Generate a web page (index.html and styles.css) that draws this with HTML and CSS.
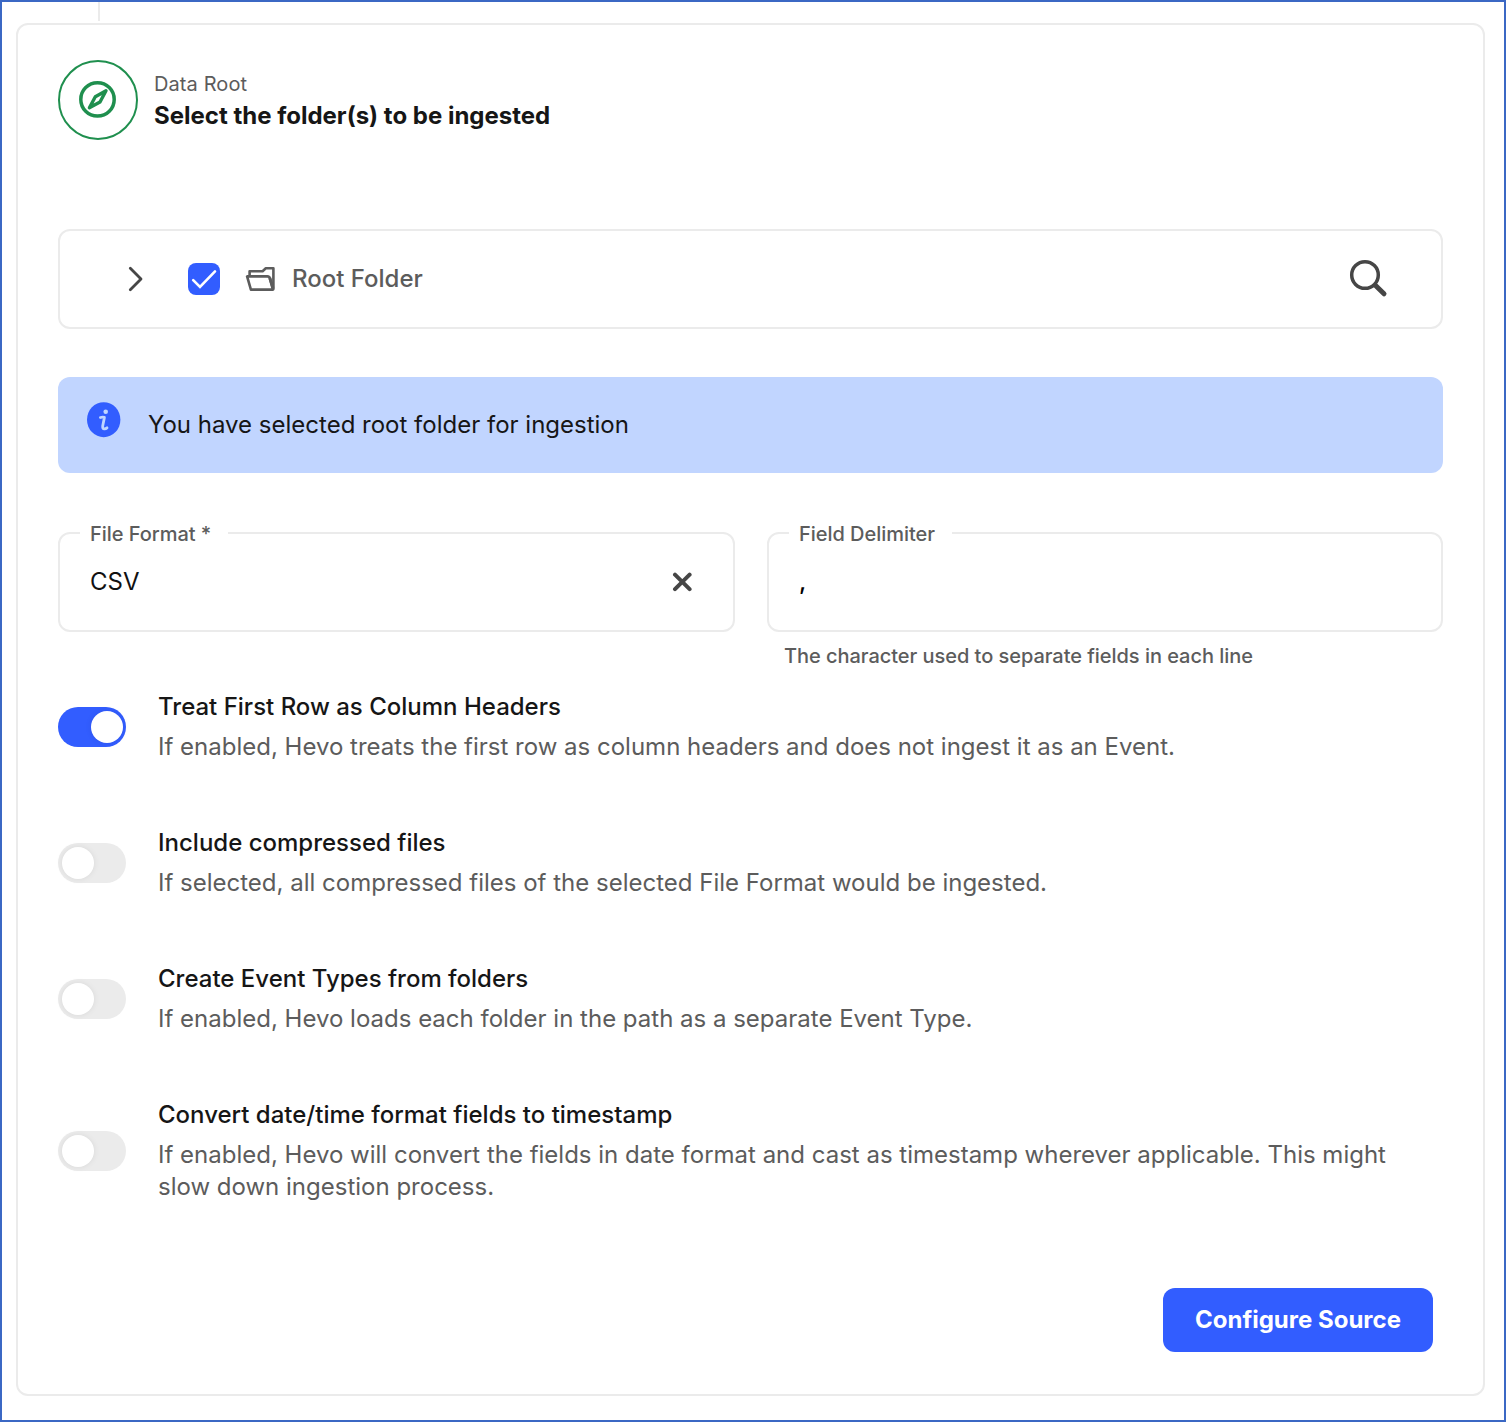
FILE: index.html
```
<!DOCTYPE html>
<html lang="en">
<head>
    <meta charset="UTF-8">
    <meta name="viewport" content="width=device-width, initial-scale=1.0">
    <title>Configure Source</title>
    <link rel="stylesheet" href="styles.css">
</head>
<body>
    <div class="connector"></div>

    <main class="card">
        <header class="step-header">
            <div class="step-icon">
                <svg width="40" height="40" viewBox="0 0 40 40" fill="none" stroke="#1f8f4e" stroke-linejoin="round">
                    <circle cx="19.5" cy="19.4" r="16.7" stroke-width="3.5"/>
                    <path d="M28 10.8 L17.3 16.8 L11.4 27.8 L22 22 Z" stroke-width="3.4"/>
                </svg>
            </div>
            <div>
                <div class="step-label">Data Root</div>
                <h1>Select the folder(s) to be ingested</h1>
            </div>
        </header>

        <div class="folder-tree">
            <svg class="chevron" width="16" height="26" viewBox="0 0 16 26" fill="none" stroke="#464646" stroke-width="2.8" stroke-linecap="round" stroke-linejoin="round">
                <path d="M2.3 2.2 L13 13 L2.3 23.8"/>
            </svg>
            <span class="checkbox">
                <svg width="32" height="32" viewBox="0 0 32 32" fill="none" stroke="#fff" stroke-width="2.6" stroke-linecap="round">
                    <path d="M5.2 17.2 L12 24 L27 8.4"/>
                </svg>
            </span>
            <svg class="folder" width="32" height="26" viewBox="0 0 32 26" fill="none" stroke="#5c5c5c" stroke-width="2.6" stroke-linejoin="round">
                <path d="M4.6 9.5 V5.2 H17.6 L20.8 2.3 H28.4 V23.6"/>
                <path d="M2.1 10.4 H22.4 Q24.3 10.4 24.8 12.2 L28 23.6 H5.9 Z"/>
                <path d="M24.8 12 L28 22" stroke-width="3"/>
            </svg>
            <span class="folder-name">Root Folder</span>
            <svg class="search" width="40" height="40" viewBox="0 0 40 40" fill="none" stroke="#464646" stroke-linecap="round">
                <circle cx="17" cy="17" r="13.3" stroke-width="3.5"/>
                <path d="M27.8 27.8 L36 35.8" stroke-width="5"/>
            </svg>
        </div>

        <div class="banner">
            <svg width="34" height="36" viewBox="0 0 34 36">
                <ellipse cx="16.7" cy="17.7" rx="16.7" ry="17.5" fill="#325dff"/>
                <circle cx="18.7" cy="9.7" r="2.3" fill="#c1d5ff"/>
                <path d="M13.4 15.5 Q15.5 15 17.4 15.4 L15.7 24 Q15.4 27 17.4 26.9 Q18.9 26.7 20 25.8" fill="none" stroke="#c1d5ff" stroke-width="2.8" stroke-linecap="round" stroke-linejoin="round"/>
            </svg>
            <span>You have selected root folder for ingestion</span>
        </div>

        <div class="fields">
            <fieldset class="field">
                <legend class="legend-format">File Format *</legend>
                <div class="field-value">
                    <span>CSV</span>
                    <svg width="20" height="20" viewBox="0 0 20 20" stroke="#464646" stroke-width="4" stroke-linecap="round">
                        <path d="M3 2.7 L17.6 17.2 M17.6 2.7 L3 17.2"/>
                    </svg>
                </div>
            </fieldset>
            <div>
                <fieldset class="field">
                    <legend class="legend-delimiter">Field Delimiter</legend>
                    <div class="field-value delimiter">
                        <span>,</span>
                    </div>
                </fieldset>
                <p class="hint">The character used to separate fields in each line</p>
            </div>
        </div>

        <div class="options">
            <div class="option">
                <span class="toggle on"></span>
                <div>
                    <h2>Treat First Row as Column Headers</h2>
                    <p>If enabled, Hevo treats the first row as column headers and does not ingest it as an Event.</p>
                </div>
            </div>
            <div class="option">
                <span class="toggle"></span>
                <div>
                    <h2>Include compressed files</h2>
                    <p>If selected, all compressed files of the selected File Format would be ingested.</p>
                </div>
            </div>
            <div class="option">
                <span class="toggle"></span>
                <div>
                    <h2>Create Event Types from folders</h2>
                    <p>If enabled, Hevo loads each folder in the path as a separate Event Type.</p>
                </div>
            </div>
            <div class="option">
                <span class="toggle"></span>
                <div>
                    <h2>Convert date/time format fields to timestamp</h2>
                    <p>If enabled, Hevo will convert the fields in date format and cast as timestamp wherever applicable. This might slow down ingestion process.</p>
                </div>
            </div>
        </div>

        <div class="actions">
            <button type="button" class="btn">Configure Source</button>
        </div>
    </main>
</body>
</html>
```

FILE: styles.css
```
* {
    margin: 0;
    padding: 0;
    box-sizing: border-box;
}

body {
    font-family: Inter, sans-serif;
    font-size: 24px;
    line-height: 32px;
    color: #161616;
    background: #fff;
    height: 1422px;
    border: 2px solid #3b68c4;
    padding: 0 19px 0 14px;
}

svg {
    display: block;
    flex-shrink: 0;
}

.connector {
    width: 2px;
    height: 19px;
    margin-left: 82px;
    background: #ebebeb;
}

.card {
    height: 1373px;
    margin-top: 2px;
    padding: 35px 40px 0;
    border: 2px solid #ebebeb;
    border-radius: 12px;
}

.step-header {
    display: flex;
    align-items: center;
    gap: 16px;
}

.step-icon {
    display: flex;
    align-items: center;
    justify-content: center;
    width: 80px;
    height: 80px;
    border: 2px solid #1f8f4e;
    border-radius: 50%;
}

.step-label {
    font-size: 20px;
    color: #5c5c5c;
    letter-spacing: 0.1px;
}

h1 {
    font-size: 24px;
    font-weight: 700;
}

.folder-tree {
    display: flex;
    align-items: center;
    height: 100px;
    margin-top: 89px;
    padding: 0 53px 0 68px;
    border: 2px solid #ebebeb;
    border-radius: 12px;
}

.checkbox {
    width: 32px;
    height: 32px;
    margin-left: 44px;
    border-radius: 8px;
    background: #325dff;
}

.folder {
    margin-left: 25px;
}

.folder-name {
    margin-left: 15px;
    font-weight: 500;
    color: #5c5c5c;
}

.search {
    margin: 0 0 2px auto;
}

.banner {
    display: flex;
    align-items: center;
    gap: 27px;
    height: 96px;
    margin-top: 48px;
    padding-left: 29px;
    border-radius: 12px;
    background: #c1d5ff;
}

.banner svg {
    margin-bottom: 10px;
}

.fields {
    display: grid;
    grid-template-columns: 677px 676px;
    gap: 32px;
    margin-top: 48px;
}

.field {
    height: 111px;
    padding: 0 41px 0 20px;
    border: 2px solid #ebebeb;
    border-radius: 12px;
}

.field legend {
    height: 24px;
    padding: 0 10px;
    font-size: 20px;
    font-weight: 500;
    line-height: 26px;
    letter-spacing: -0.04px;
    color: #5c5c5c;
    white-space: nowrap;
}

.legend-format {
    width: 148px;
}

.legend-delimiter {
    width: 163px;
}

.field-value {
    display: flex;
    align-items: center;
    justify-content: space-between;
    padding: 21px 0 0 10px;
    color: #111;
}

.delimiter {
    font-weight: 500;
    color: #000;
}

.hint {
    padding: 8px 0 0 17px;
    font-size: 20px;
    font-weight: 500;
    letter-spacing: -0.04px;
    color: #5c5c5c;
}

.options {
    display: flex;
    flex-direction: column;
    gap: 64px;
    margin-top: 19px;
}

.option {
    display: flex;
    align-items: center;
    gap: 32px;
}

.option h2 {
    margin-bottom: 8px;
    font-size: 24px;
    font-weight: 500;
}

.option p {
    color: #5c5c5c;
}

.toggle {
    display: flex;
    flex-shrink: 0;
    width: 68px;
    height: 40px;
    padding: 4px;
    border-radius: 20px;
    background: #ebebeb;
}

.toggle::before {
    content: "";
    width: 32px;
    height: 32px;
    border-radius: 50%;
    background: #fff;
    box-shadow: 0 0 6px rgba(0, 0, 0, 0.08);
}

.toggle.on {
    justify-content: flex-end;
    padding-right: 3px;
    background: #325dff;
}

.actions {
    display: flex;
    justify-content: flex-end;
    margin-top: 85px;
    padding-right: 10px;
}

.btn {
    width: 270px;
    height: 64px;
    padding-bottom: 2px;
    border: none;
    border-radius: 12px;
    background: #325dff;
    color: #fff;
    font-family: inherit;
    font-size: 24px;
    font-weight: 700;
    cursor: pointer;
}
```
